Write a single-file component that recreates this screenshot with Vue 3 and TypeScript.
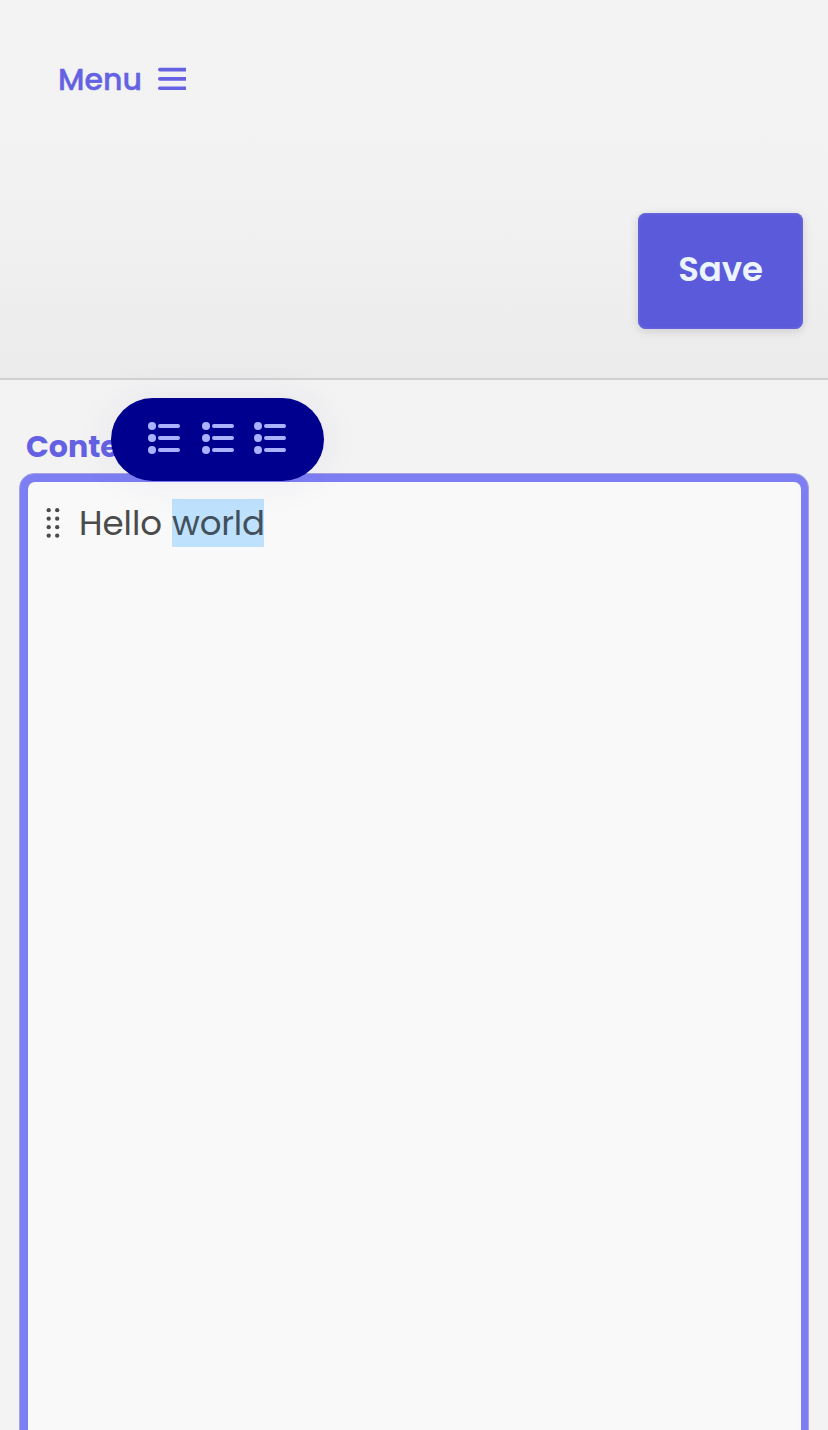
<script setup lang="ts">
const tools: string[] = ['bullets', 'numbers', 'checks']
const rows: number[] = [4, 16, 28]
const burgerRows: number[] = [2.6, 11.9, 21.2]
const gripRows: number[] = [2.2, 10.7, 19.2, 27.7]
</script>

<template>
  <div class="page">
    <header class="header">
      <button class="menu" type="button">
        <span class="menu-text">Menu</span>
        <svg class="burger" width="28" height="24" viewBox="0 0 28 24">
          <rect v-for="y in burgerRows" :key="y" x="0" :y="y - 1.8" width="32" height="3.6" rx="1.8" />
        </svg>
      </button>
      <button class="save" type="button"><span class="save-text">Save</span></button>
    </header>
    <main class="main">
      <label class="label">Content</label>
      <div class="toolbar">
        <svg v-for="tool in tools" :key="tool" :class="['tool', tool]" width="32" height="32" viewBox="0 0 32 32">
          <g v-for="y in rows" :key="y">
            <circle :cx="4" :cy="y" r="4" />
            <rect x="10" :y="y - 2" width="22" height="4" rx="2" />
          </g>
        </svg>
      </div>
      <div class="editor">
        <div class="line">
          <svg class="grip" width="14" height="30" viewBox="0 0 14 30">
            <g v-for="y in gripRows" :key="y">
              <circle cx="2.7" :cy="y" r="2.15" />
              <circle cx="11.2" :cy="y" r="2.15" />
            </g>
          </svg>
          <span class="hello">Hello</span>
          <span class="selected">world</span>
        </div>
      </div>
    </main>
  </div>
</template>

<style>
body {
  background: #f3f3f3;
}
</style>

<style scoped>
.page {
  box-sizing: border-box;
  height: 1430px;
  overflow: hidden;
  background: #f3f3f3;
  font-family: Poppins, Inter, "Liberation Sans", sans-serif;
}
button {
  font: inherit;
  border: 0;
  padding: 0;
}
.header {
  box-sizing: border-box;
  height: 380px;
  padding: 59px 25px 0 58px;
  display: flex;
  flex-direction: column;
  background: linear-gradient(#f3f3f3 0%, #f2f2f2 47%, #f0f0f0 67%, #ebebeb 100%);
  border-bottom: 2px solid #d1d1d1;
}
.menu {
  display: flex;
  align-items: center;
  height: 40px;
  background: none;
  color: #6461e3;
}
.menu-text {
  width: 100px;
  padding-top: 2px;
  text-align: left;
  font-size: 30px;
  font-weight: 500;
  line-height: 40px;
  -webkit-text-stroke: 0.4px #6461e3;
}
.burger {
  fill: #6461e3;
}
.save {
  align-self: flex-end;
  width: 165px;
  height: 116px;
  margin-top: 114px;
  padding-bottom: 3px;
  border-radius: 8px;
  background: #5b5adb;
  color: #ebf4ff;
  box-shadow: inset 0 0 3px 1px #6a68de, 0 2px 10px rgba(0, 0, 0, 0.14);
}
.save-text {
  font-size: 34px;
  font-weight: 600;
  letter-spacing: -0.1px;
}
.main {
  position: relative;
  height: 1050px;
  padding: 46px 19px 0;
}
.label {
  display: block;
  height: 47px;
  padding-left: 7px;
  font-size: 30px;
  font-weight: 700;
  line-height: 42px;
  color: #6461e3;
}
.toolbar {
  position: absolute;
  z-index: 1;
  left: 111px;
  top: 18px;
  box-sizing: border-box;
  width: 213px;
  height: 83px;
  padding: 24px 38px 0 37px;
  display: flex;
  gap: 21px;
  border-radius: 42px;
  background: #00008f;
  box-shadow: 0 0 40px rgba(60, 60, 160, 0.07);
}
.tool {
  fill: #aab2ff;
}
.numbers {
  margin: 0 -1px 0 1px;
}
.editor {
  box-sizing: border-box;
  height: 1000px;
  border: 1px solid #a5a4df;
  border-radius: 15px;
  background: #7e7ef3;
  padding: 8px 7px 8px 8px;
}
.line {
  box-sizing: border-box;
  display: flex;
  align-items: flex-start;
  height: 982px;
  padding: 17px 0 0 18px;
  border-radius: 7px;
  background: #f9f9f9;
  font-size: 34px;
  line-height: 48px;
  color: #4b4b4b;
}
.grip {
  margin-top: 9px;
  fill: #4b4b4b;
}
.hello {
  width: 93px;
  margin-left: 19px;
}
.selected {
  width: 92px;
  height: 48px;
  background: #bee1fd;
  color: #42505b;
  letter-spacing: -0.2px;
}
</style>
